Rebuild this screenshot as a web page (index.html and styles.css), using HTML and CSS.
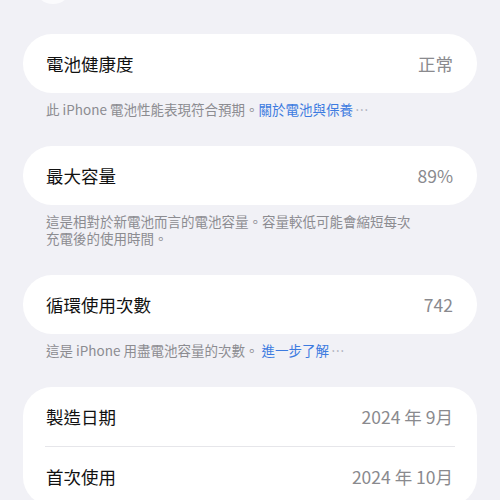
FILE: index.html
```html
<!DOCTYPE html>
<html lang="zh-Hant">
<head>
    <meta charset="UTF-8">
    <meta name="viewport" content="width=device-width, initial-scale=1.0">
    <title>電池</title>
    <link rel="stylesheet" href="styles.css">
</head>
<body>
    <div class="back-hint"></div>
    <div class="page">
        <div class="card">
            <div class="row">
                <span class="label">電池健康度</span>
                <span class="value">正常</span>
            </div>
        </div>
        <p class="footer">此 iPhone 電池性能表現符合預期。<a class="link">關於電池與保養</a><span class="more">⋯</span></p>

        <div class="card">
            <div class="row">
                <span class="label">最大容量</span>
                <span class="value">89%</span>
            </div>
        </div>
        <p class="footer">這是相對於新電池而言的電池容量。容量較低可能會縮短每次<br>充電後的使用時間。</p>

        <div class="card">
            <div class="row">
                <span class="label">循環使用次數</span>
                <span class="value">742</span>
            </div>
        </div>
        <p class="footer">這是 iPhone 用盡電池容量的次數。 <a class="link">進一步了解</a><span class="more">⋯</span></p>

        <div class="card">
            <div class="row">
                <span class="label">製造日期</span>
                <span class="value">2024 年 9月</span>
            </div>
            <div class="divider"></div>
            <div class="row">
                <span class="label">首次使用</span>
                <span class="value">2024 年 10月</span>
            </div>
        </div>
    </div>
</body>
</html>
```

FILE: styles.css
```css
body {
    margin: 0;
    background: #f1f1f6;
    font-family: "Noto Sans CJK TC", "Noto Sans", sans-serif;
    overflow: hidden;
}
.back-hint {
    position: absolute;
    left: 36px;
    top: -24px;
    width: 34px;
    height: 28px;
    border-radius: 50%;
    background: #fbfbfd;
}
.page {
    padding: 34px 23px 0;
}
.card {
    background: #fff;
    border-radius: 29px;
}
.row {
    height: 59px;
    padding: 0 24px 0 23px;
    display: flex;
    align-items: center;
    justify-content: space-between;
    font-size: 17.5px;
}
.label {
    color: #111;
}
.value {
    color: #8a8a8e;
}
.divider {
    height: 1px;
    margin: 0 22px;
    background: #e6e6ea;
}
.footer {
    margin: 0 0 28px;
    padding: 8px 23px 0;
    font-size: 13.5px;
    line-height: 17px;
    color: #8c8c91;
}
.link {
    color: #3d7be0;
}
.more {
    color: #a8abb6;
    margin-left: 2px;
}
```
